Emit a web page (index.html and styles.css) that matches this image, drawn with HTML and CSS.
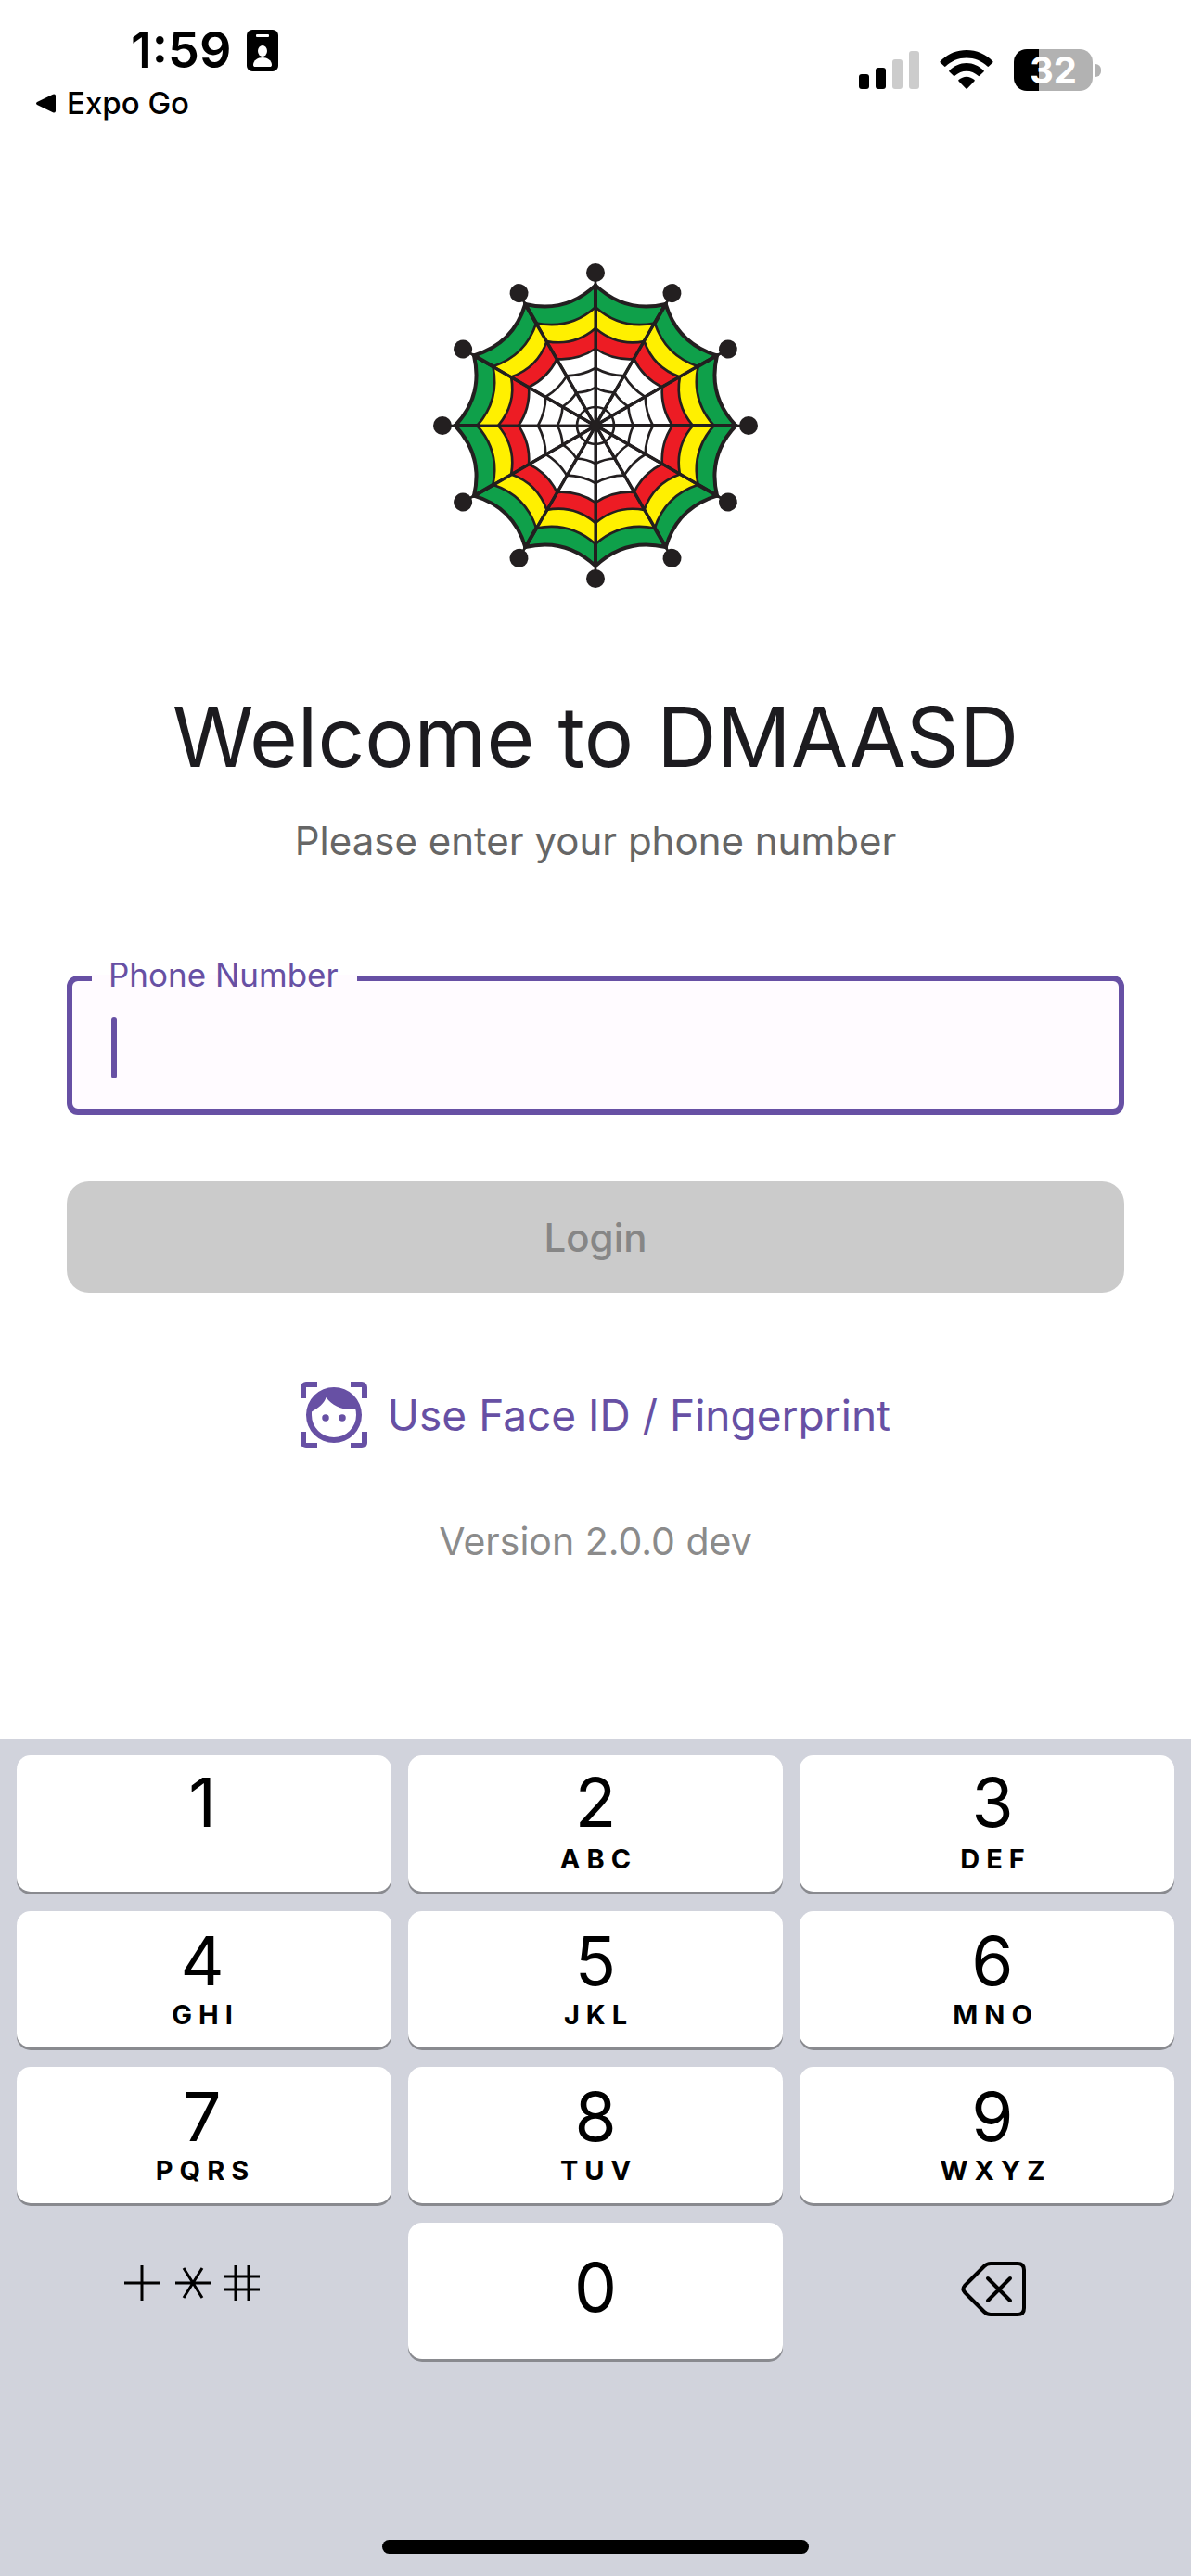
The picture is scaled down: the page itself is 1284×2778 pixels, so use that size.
FILE: index.html
```html
<!DOCTYPE html>
<html lang="en">
<head>
<meta charset="utf-8">
<meta name="viewport" content="width=device-width, initial-scale=1">
<title>DMAASD – Login</title>
<link rel="stylesheet" href="styles.css">
</head>
<body>
<header class="status">
  <div class="status-left">
    <div class="clock">
      <span>1:59</span>
      <svg class="badge-icon" viewBox="0 0 34 45" aria-hidden="true">
        <rect width="34" height="45" rx="6"/>
        <rect x="10" y="5" width="14" height="3" rx="1" fill="#fff"/>
        <ellipse cx="17" cy="23" rx="5" ry="6" fill="#fff"/>
        <path d="M7 38c0-5 5-8 10-8s10 3 10 8c0 1.500-1 2-2 2H9c-1 0-2-.500-2-2z" fill="#fff"/>
      </svg>
    </div>
    <a class="back" href="#">
      <svg class="back-icon" viewBox="0 0 21 21" aria-hidden="true"><path d="M1 9 18 .800Q21-.200 21 2.500v16Q21 21.200 18 20.200L1 12Q-1 10.500 1 9z"/></svg>
      <span>Expo Go</span>
    </a>
  </div>
  <div class="status-right">
    <svg class="signal" viewBox="0 0 65 45" aria-hidden="true">
      <rect y="27" width="11" height="16" rx="3"/>
      <rect x="18" y="20" width="11" height="23" rx="3"/>
      <rect x="36" y="11" width="11" height="32" rx="3" fill="#ccc"/>
      <rect x="54" y="2" width="11" height="41" rx="3" fill="#ccc"/>
    </svg>
    <svg class="wifi" viewBox="0 0 58 45" aria-hidden="true">
      <path d="M.800 14.500a1 1 0 0 1 0-1.500C8 5.500 18 1 29 1s21 4.500 28.200 12a1 1 0 0 1 0 1.500L53 18.500a1 1 0 0 1-1.500 0C45.500 12.800 37.500 9.500 29 9.500S12.500 12.800 6.500 18.500a1 1 0 0 1-1.500 0z"/>
      <path d="M10.500 24.500a1 1 0 0 1 0-1.500C15.500 18 22 15 29 15s13.500 3 18.500 8a1 1 0 0 1 0 1.500L43 28.800a1 1 0 0 1-1.400 0C38 25.500 33.500 23.700 29 23.700s-9 1.800-12.600 5.100a1 1 0 0 1-1.400 0z"/>
      <path d="M20.500 34.500a1 1 0 0 1 0-1.400C23 31 26 29.700 29 29.700s6 1.300 8.500 3.400a1 1 0 0 1 0 1.400L29.800 42.400a1 1 0 0 1-1.500 0z"/>
    </svg>
    <div class="battery">
      <span class="battery-body">32</span>
      <span class="battery-tip"></span>
    </div>
  </div>
</header>

<main class="login">
  <svg class="logo" viewBox="-540 -540 1080 1080" role="img" aria-label="DMAASD logo">
    <defs>
      <g id="wedge" stroke="#231f20" stroke-width="8" stroke-linejoin="round">
        <path fill="#0fa04a" stroke-width="12" d="M0 0V-454Q97-362 227-393.200z"/>
        <path fill="#fff000" d="M0 0V-383Q83-309 191.500-331.700z"/>
        <path fill="#ed1c24" d="M0 0V-315Q69-256 157.500-272.800z"/>
        <path fill="#fff" d="M0 0V-249Q56-211 124.500-215.600z"/>
        <path fill="none" d="M0-186Q43-162 93-161M0-123Q29-108 61.500-106.500"/>
      </g>
      <g id="spoke">
        <path d="M0 0V-480" stroke="#231f20" stroke-width="8"/>
        <path d="M-9-440 0-475 9-440z" fill="#231f20"/>
        <circle cy="-495" r="30" fill="#231f20"/>
      </g>
    </defs>
    <use href="#wedge"/><use href="#wedge" transform="rotate(30)"/><use href="#wedge" transform="rotate(60)"/>
    <use href="#wedge" transform="rotate(90)"/><use href="#wedge" transform="rotate(120)"/><use href="#wedge" transform="rotate(150)"/>
    <use href="#wedge" transform="rotate(180)"/><use href="#wedge" transform="rotate(210)"/><use href="#wedge" transform="rotate(240)"/>
    <use href="#wedge" transform="rotate(270)"/><use href="#wedge" transform="rotate(300)"/><use href="#wedge" transform="rotate(330)"/>
    <use href="#spoke"/><use href="#spoke" transform="rotate(30)"/><use href="#spoke" transform="rotate(60)"/>
    <use href="#spoke" transform="rotate(90)"/><use href="#spoke" transform="rotate(120)"/><use href="#spoke" transform="rotate(150)"/>
    <use href="#spoke" transform="rotate(180)"/><use href="#spoke" transform="rotate(210)"/><use href="#spoke" transform="rotate(240)"/>
    <use href="#spoke" transform="rotate(270)"/><use href="#spoke" transform="rotate(300)"/><use href="#spoke" transform="rotate(330)"/>
    <circle r="60" fill="none" stroke="#231f20" stroke-width="8"/>
    <circle r="17" fill="#231f20"/>
  </svg>
  <h1 class="title">Welcome to DMAASD</h1>
  <p class="subtitle">Please enter your phone number</p>

  <form class="form">
    <div class="field">
      <label class="field-label" for="phone">Phone Number</label>
      <input class="field-input" id="phone" type="tel">
      <span class="caret"></span>
    </div>
    <button class="submit" type="submit" disabled>Login</button>
  </form>

  <button class="biometric" type="button">
    <svg class="face" viewBox="0 0 24 24" aria-hidden="true">
      <path d="M0 2A2 2 0 0 1 2 0H6V2H2V6H0zM24 22A2 2 0 0 1 22 24H18V22H22V18H24zM2 24A2 2 0 0 1 0 22V18H2V22H6V24zM22 0A2 2 0 0 1 24 2V6H22V2H18V0z"/>
      <path fill-rule="evenodd" d="M12 2a10 10 0 1 0 0 20 10 10 0 0 0 0-20zM4 10.800C6.500 9.500 8.400 7.900 9.200 5.700 11.200 8.500 14.500 10 17.500 10c.800 0 1.500-.100 2.200-.300.200.700.300 1.500.300 2.300a8 8 0 0 1-16 0z"/>
      <circle cx="9" cy="13" r="1.250"/><circle cx="15" cy="13" r="1.250"/>
    </svg>
    <span>Use Face ID / Fingerprint</span>
  </button>
  <p class="version">Version 2.0.0 dev</p>
</main>

<section class="keyboard" aria-label="Keypad">
  <div class="keys">
    <button class="key key-first-row key-left" type="button"><span class="digit">1</span></button>
    <button class="key key-first-row" type="button"><span class="digit">2</span><span class="letters">ABC</span></button>
    <button class="key key-first-row key-right" type="button"><span class="digit">3</span><span class="letters">DEF</span></button>
    <button class="key key-left" type="button"><span class="digit">4</span><span class="letters">GHI</span></button>
    <button class="key" type="button"><span class="digit">5</span><span class="letters">JKL</span></button>
    <button class="key key-right" type="button"><span class="digit">6</span><span class="letters">MNO</span></button>
    <button class="key key-left" type="button"><span class="digit">7</span><span class="letters">PQRS</span></button>
    <button class="key" type="button"><span class="digit">8</span><span class="letters">TUV</span></button>
    <button class="key key-right" type="button"><span class="digit">9</span><span class="letters">WXYZ</span></button>
    <button class="key key-plain" type="button" aria-label="Symbols">
      <svg class="symbols" viewBox="0 0 172 56" fill="none" stroke="#000" stroke-width="3" aria-hidden="true">
        <path d="M19 0V38M0 19H38"/>
        <path d="M55 19H93M64 3 84 35M84 3 64 35"/>
        <path d="M120 0V38M134 0V38M108 12H146M108 26H146"/>
      </svg>
    </button>
    <button class="key key-zero" type="button"><span class="digit">0</span></button>
    <button class="key key-plain" type="button" aria-label="Delete">
      <svg class="delete" viewBox="0 0 84 66" fill="none" stroke="#000" stroke-width="4" stroke-linecap="round" stroke-linejoin="round" aria-hidden="true">
        <path d="M46 3H75Q82 3 82 10V51Q82 58 75 58H46Q42 58 39 55L18 34Q15 30.500 18 27L39 6Q42 3 46 3z"/>
        <path d="M43 19 67 43M67 19 43 43"/>
      </svg>
    </button>
  </div>
  <div class="home-bar"></div>
</section>
</body>
</html>
```
FILE: styles.css
```css
* { box-sizing: border-box; }

body {
  margin: 0;
  min-height: 100vh;
  display: flex;
  flex-direction: column;
  background: #fff;
  color: #000;
  font-family: Inter, "Liberation Sans", sans-serif;
}

button {
  border: 0;
  padding: 0;
  font: inherit;
  color: inherit;
}

h1, p { margin: 0; }

/* Status bar */
.status {
  display: flex;
  justify-content: space-between;
  align-items: flex-start;
  padding: 24px 97px 0 39px;
}

.status-left {
  display: flex;
  flex-direction: column;
  gap: 7px;
}

.clock {
  display: flex;
  align-items: center;
  gap: 16px;
  padding-left: 102px;
  font-size: 54px;
  line-height: 60px;
  font-weight: 600;
}

.badge-icon { width: 34px; height: 45px; }

.back {
  display: flex;
  align-items: center;
  gap: 12px;
  color: inherit;
  text-decoration: none;
  font-size: 33px;
  line-height: 40px;
  font-weight: 500;
}

.back-icon { width: 21px; height: 21px; }

.status-right {
  display: flex;
  gap: 22px;
  padding-top: 29px;
}

.signal { width: 65px; height: 45px; }
.wifi { width: 58px; height: 45px; }

.battery {
  display: flex;
  align-items: center;
  gap: 3px;
}

.battery-body {
  width: 85px;
  border-radius: 14px;
  background: linear-gradient(to right, #000 32%, #b2b2b2 32%);
  color: #fff;
  font-size: 40px;
  line-height: 45px;
  font-weight: 700;
  text-align: center;
}

.battery-tip {
  width: 6px;
  height: 14px;
  border-radius: 0 6px 6px 0;
  background: #b2b2b2;
}

/* Login screen */
.login {
  flex: 1;
  display: flex;
  flex-direction: column;
  align-items: center;
  padding: 148px 72px 0;
}

.logo { width: 360px; height: 360px; }

.title {
  margin-top: 96px;
  color: #1c1b1f;
  font-size: 89px;
  line-height: 120px;
  font-weight: 400;
}

.subtitle {
  margin-top: 22px;
  color: #666;
  font-size: 42px;
  line-height: 60px;
}

.form {
  align-self: stretch;
  display: flex;
  flex-direction: column;
  gap: 72px;
  margin-top: 115px;
}

.field { position: relative; }

.field-input {
  display: block;
  width: 100%;
  height: 150px;
  padding: 0 42px;
  border: 6px solid #6750a4;
  border-radius: 12px;
  background: #fffbff;
  color: #1c1b1f;
  font: inherit;
  font-size: 48px;
  outline: none;
}

.field-label {
  position: absolute;
  top: -6px;
  left: 27px;
  padding: 0 20px 2px 18px;
  background: linear-gradient(#fff 5px, #fffbff 5px);
  color: #6750a4;
  font-size: 35px;
  line-height: 10px;
}

.caret {
  position: absolute;
  top: 45px;
  left: 48px;
  width: 6px;
  height: 66px;
  border-radius: 3px;
  background: #6750a4;
}

.submit {
  height: 120px;
  border-radius: 24px;
  background: #cbcbcb;
  color: #868686;
  font-size: 42px;
  font-weight: 500;
}

.biometric {
  display: flex;
  align-items: center;
  gap: 22px;
  margin-top: 96px;
  background: none;
  color: #6750a4;
  font-size: 46px;
  line-height: 72px;
}

.face {
  width: 72px;
  height: 72px;
  fill: currentColor;
}

.version {
  margin-top: 70px;
  color: #8b8b8b;
  font-size: 41px;
  line-height: 60px;
}

/* Number pad */
.keyboard {
  padding: 18px 18px 24px;
  background: #d1d3dc;
}

.keys {
  display: grid;
  grid-template-columns: repeat(3, 1fr);
  grid-auto-rows: 147px;
  gap: 21px 18px;
}

.key {
  display: flex;
  flex-direction: column;
  align-items: center;
  padding-top: 16px;
  border-radius: 15px;
  background: #fff;
  box-shadow: 0 3px 0 #898a8f;
}

.key-first-row { padding-top: 13px; gap: 3px; }
.key-left { padding-right: 4px; }
.key-right { padding-left: 12px; }
.key-zero { padding-top: 32px; }

.key-plain {
  justify-content: center;
  padding: 0;
  background: none;
  box-shadow: none;
}

.digit {
  font-size: 73px;
  line-height: 76px;
}

.letters {
  font-size: 29px;
  line-height: 40px;
  font-weight: 700;
  letter-spacing: 7px;
  text-indent: 7px;
}

.symbols { width: 172px; height: 56px; }
.delete { width: 84px; height: 66px; }

.home-bar {
  width: 460px;
  height: 15px;
  margin: 195px auto 0;
  border-radius: 8px;
  background: #000;
}
```
